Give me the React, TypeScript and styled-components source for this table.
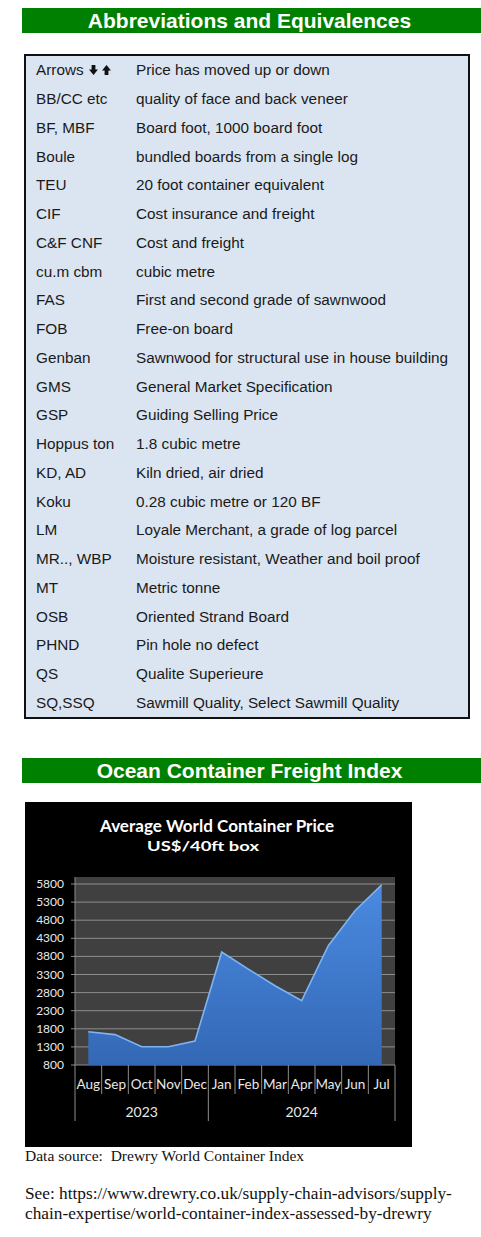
import React from "react";
import styled, { createGlobalStyle } from "styled-components";

const GlobalStyle = createGlobalStyle`
  body {
    margin: 0;
    background: #ffffff;
  }
`;

const Page = styled.div`
  width: 481px;
  padding: 8px 0 40px 22px;
  box-sizing: border-box;
`;

const Banner = styled.h2<{ $top?: number }>`
  margin: ${(p) => p.$top ?? 0}px 0 0 0;
  height: 25px;
  background: #008000;
  color: #ffffff;
  font-family: "Liberation Sans", Arial, sans-serif;
  font-weight: 700;
  font-size: 21px;
  line-height: 25px;
  text-align: center;
  padding-right: 4px;
`;

const GlossaryBox = styled.div`
  margin: 21px 0 0 2px;
  width: 446px;
  box-sizing: border-box;
  border: 2px solid #111111;
  background: #dbe5f1;
  font-family: "Liberation Sans", Arial, sans-serif;
  font-size: 15.3px;
  color: #1a1a1a;
`;

const Row = styled.div`
  display: grid;
  grid-template-columns: 100px 1fr;
  align-items: center;
  height: 28.75px;
  padding-left: 10px;
`;

const Term = styled.span`
  display: flex;
  align-items: center;
`;

const ArrowIcons = styled.span`
  display: inline-flex;
  gap: 4px;
  margin-left: 5px;
  svg {
    display: block;
  }
`;

const ChartFrame = styled.div`
  margin: 19px 0 0 3px;
  width: 387px;
  height: 345px;
  background: #000000;
  svg {
    display: block;
  }
`;

const Caption = styled.p`
  margin: 0 0 0 3px;
  font-family: "Liberation Serif", "Times New Roman", serif;
  font-size: 15.5px;
  line-height: 17px;
  color: #111111;
  white-space: pre;
`;

const SourceNote = styled.p`
  margin: 20px 0 0 3px;
  width: 448px;
  font-family: "Liberation Serif", "Times New Roman", serif;
  font-size: 17.3px;
  line-height: 20px;
  color: #111111;
`;

const terms: [string, string][] = [
  ["Arrows", "Price has moved up or down"],
  ["BB/CC etc", "quality of face and back veneer"],
  ["BF, MBF", "Board foot, 1000 board foot"],
  ["Boule", "bundled boards from a single log"],
  ["TEU", "20 foot container equivalent"],
  ["CIF", "Cost insurance and freight"],
  ["C&F CNF", "Cost and freight"],
  ["cu.m cbm", "cubic metre"],
  ["FAS", "First and second grade of sawnwood"],
  ["FOB", "Free-on board"],
  ["Genban", "Sawnwood for structural use in house building"],
  ["GMS", "General Market Specification"],
  ["GSP", "Guiding Selling Price"],
  ["Hoppus ton", "1.8 cubic metre"],
  ["KD, AD", "Kiln dried, air dried"],
  ["Koku", "0.28 cubic metre or 120 BF"],
  ["LM", "Loyale Merchant, a grade of log parcel"],
  ["MR.., WBP", "Moisture resistant, Weather and boil proof"],
  ["MT", "Metric tonne"],
  ["OSB", "Oriented Strand Board"],
  ["PHND", "Pin hole no defect"],
  ["QS", "Qualite Superieure"],
  ["SQ,SSQ", "Sawmill Quality, Select Sawmill Quality"],
];

const DownArrow = () => (
  <svg width="9" height="10" viewBox="0 0 9 10">
    <path d="M2.6 0h3.8v4.6H9L4.5 10 0 4.6h2.6z" fill="#111" />
  </svg>
);

const UpArrow = () => (
  <svg width="9" height="10" viewBox="0 0 9 10">
    <path d="M2.6 10h3.8V5.4H9L4.5 0 0 5.4h2.6z" fill="#111" />
  </svg>
);

// chart data, US$ per 40ft box
const months = ["Aug", "Sep", "Oct", "Nov", "Dec", "Jan", "Feb", "Mar", "Apr", "May", "Jun", "Jul"];
const prices = [1720, 1640, 1305, 1305, 1460, 3920, 3450, 2990, 2580, 4095, 5060, 5775];
const ticks = [800, 1300, 1800, 2300, 2800, 3300, 3800, 4300, 4800, 5300, 5800];

const PX = 50;
const PW = 320;
const PTOP = 75;
const PBOT = 263;
const step = PW / 12;
const yFor = (v: number) => PBOT - ((v - 800) / 500) * 18.1;
const xFor = (i: number) => PX + (i + 0.5) * step;

const axisFont = "Lato, 'Open Sans', sans-serif";

const PriceChart = () => {
  const pts = prices.map((v, i) => `${xFor(i).toFixed(1)},${yFor(v).toFixed(1)}`);
  const area = `M${xFor(0).toFixed(1)},${PBOT} L${pts.join(" L")} L${xFor(11).toFixed(1)},${PBOT} Z`;
  return (
    <svg width="387" height="345" viewBox="0 0 387 345">
      <defs>
        <linearGradient id="areaFill" x1="0" y1="0" x2="0" y2="1">
          <stop offset="0" stopColor="#4a8ae0" />
          <stop offset="1" stopColor="#3468b6" />
        </linearGradient>
      </defs>
      <text
        x="192"
        y="30"
        fill="#ffffff"
        fontFamily={axisFont}
        fontWeight="700"
        fontSize="17"
        textAnchor="middle"
        textLength="234"
        lengthAdjust="spacingAndGlyphs"
      >
        Average World Container Price
      </text>
      <text
        x="178"
        y="49"
        fill="#ffffff"
        fontFamily={axisFont}
        fontWeight="700"
        fontSize="13"
        textAnchor="middle"
        textLength="112"
        lengthAdjust="spacingAndGlyphs"
      >
        US$/40ft box
      </text>
      <rect x={PX} y={PTOP} width={PW} height={PBOT - PTOP} fill="#404040" />
      {ticks.map((v) => (
        <g key={v}>
          <line x1={PX - 4} x2={PX + PW} y1={yFor(v)} y2={yFor(v)} stroke="#8c8c8c" strokeWidth="1" />
          <text
            x="39"
            y={yFor(v) + 4}
            fill="#e8e8e8"
            fontFamily={axisFont}
            fontSize="12"
            textAnchor="end"
          >
            {v}
          </text>
        </g>
      ))}
      <line x1={PX} x2={PX} y1={PTOP} y2={PBOT} stroke="#8c8c8c" />
      <path d={area} fill="url(#areaFill)" />
      <polyline points={pts.join(" ")} fill="none" stroke="#7fb4f2" strokeWidth="1.6" />
      {Array.from({ length: 13 }, (_, k) => {
        const x = PX + k * step;
        const long = k === 0 || k === 5 || k === 12;
        return <line key={k} x1={x} x2={x} y1={PBOT} y2={long ? 319 : 292} stroke="#8c8c8c" />;
      })}
      {months.map((m, i) => (
        <text
          key={m}
          x={xFor(i)}
          y="287"
          fill="#e8e8e8"
          fontFamily={axisFont}
          fontSize="13.5"
          textAnchor="middle"
        >
          {m}
        </text>
      ))}
      <text x={PX + 2.5 * step} y="315" fill="#e8e8e8" fontFamily={axisFont} fontSize="14" textAnchor="middle">
        2023
      </text>
      <text x={PX + 8.5 * step} y="315" fill="#e8e8e8" fontFamily={axisFont} fontSize="14" textAnchor="middle">
        2024
      </text>
    </svg>
  );
};

export default function App() {
  return (
    <Page>
      <GlobalStyle />
      <Banner>Abbreviations and Equivalences</Banner>
      <GlossaryBox>
        {terms.map(([term, meaning], i) => (
          <Row key={term}>
            <Term>
              {term}
              {i === 0 && (
                <ArrowIcons>
                  <DownArrow />
                  <UpArrow />
                </ArrowIcons>
              )}
            </Term>
            <span>{meaning}</span>
          </Row>
        ))}
      </GlossaryBox>
      <Banner $top={39}>Ocean Container Freight Index</Banner>
      <ChartFrame>
        <PriceChart />
      </ChartFrame>
      <Caption>Data source:  Drewry World Container Index</Caption>
      <SourceNote>
        See: https://www.drewry.co.uk/supply-chain-advisors/supply-chain-expertise/world-container-index-assessed-by-drewry
      </SourceNote>
    </Page>
  );
}
